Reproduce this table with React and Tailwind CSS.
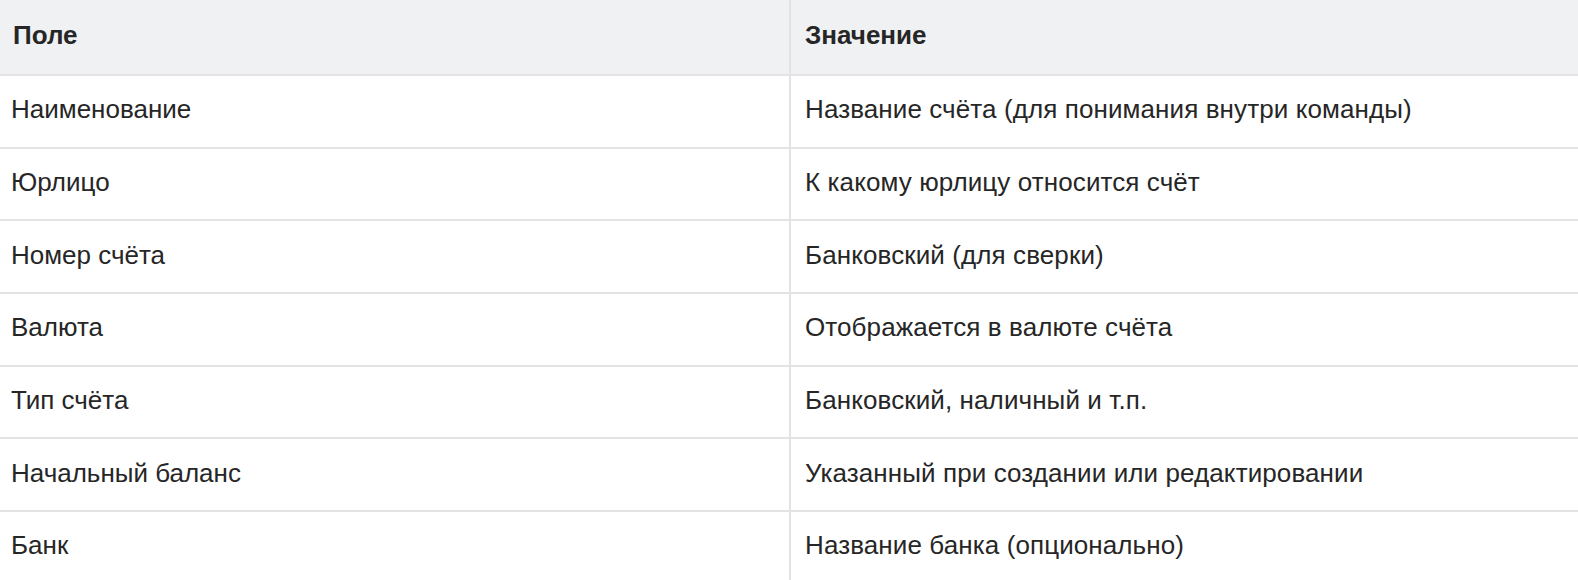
import React from 'react';

const ROWS = [
  ['Наименование', 'Название счёта (для понимания внутри команды)'],
  ['Юрлицо', 'К какому юрлицу относится счёт'],
  ['Номер счёта', 'Банковский (для сверки)'],
  ['Валюта', 'Отображается в валюте счёта'],
  ['Тип счёта', 'Банковский, наличный и т.п.'],
  ['Начальный баланс', 'Указанный при создании или редактировании'],
  ['Банк', 'Название банка (опционально)'],
];

const App = () => {
  return (
    <div className="w-full h-[580px] overflow-hidden bg-white text-[#262626] font-['Liberation_Sans',Arial,sans-serif] text-[26px]">
      <div className="grid grid-cols-[791px_1fr] h-[76px] bg-[#f0f1f3] border-b-2 border-[#e3e3e6]">
        <div className="flex items-center pl-[13px] pb-[3px] font-bold border-r-2 border-[#e3e3e6]">Поле</div>
        <div className="flex items-center pl-[14px] pb-[3px] font-bold">Значение</div>
      </div>
      {ROWS.map(([field, value]) => (
        <div key={field} className="grid grid-cols-[791px_1fr] h-[72.7px] border-b-2 border-[#e3e3e6]">
          <div className="flex items-center pl-[11px] pb-[3px] border-r-2 border-[#e3e3e6]">{field}</div>
          <div className="flex items-center pl-[14px] pb-[3px] tracking-[0.1px]">{value}</div>
        </div>
      ))}
    </div>
  );
};

export default App;
